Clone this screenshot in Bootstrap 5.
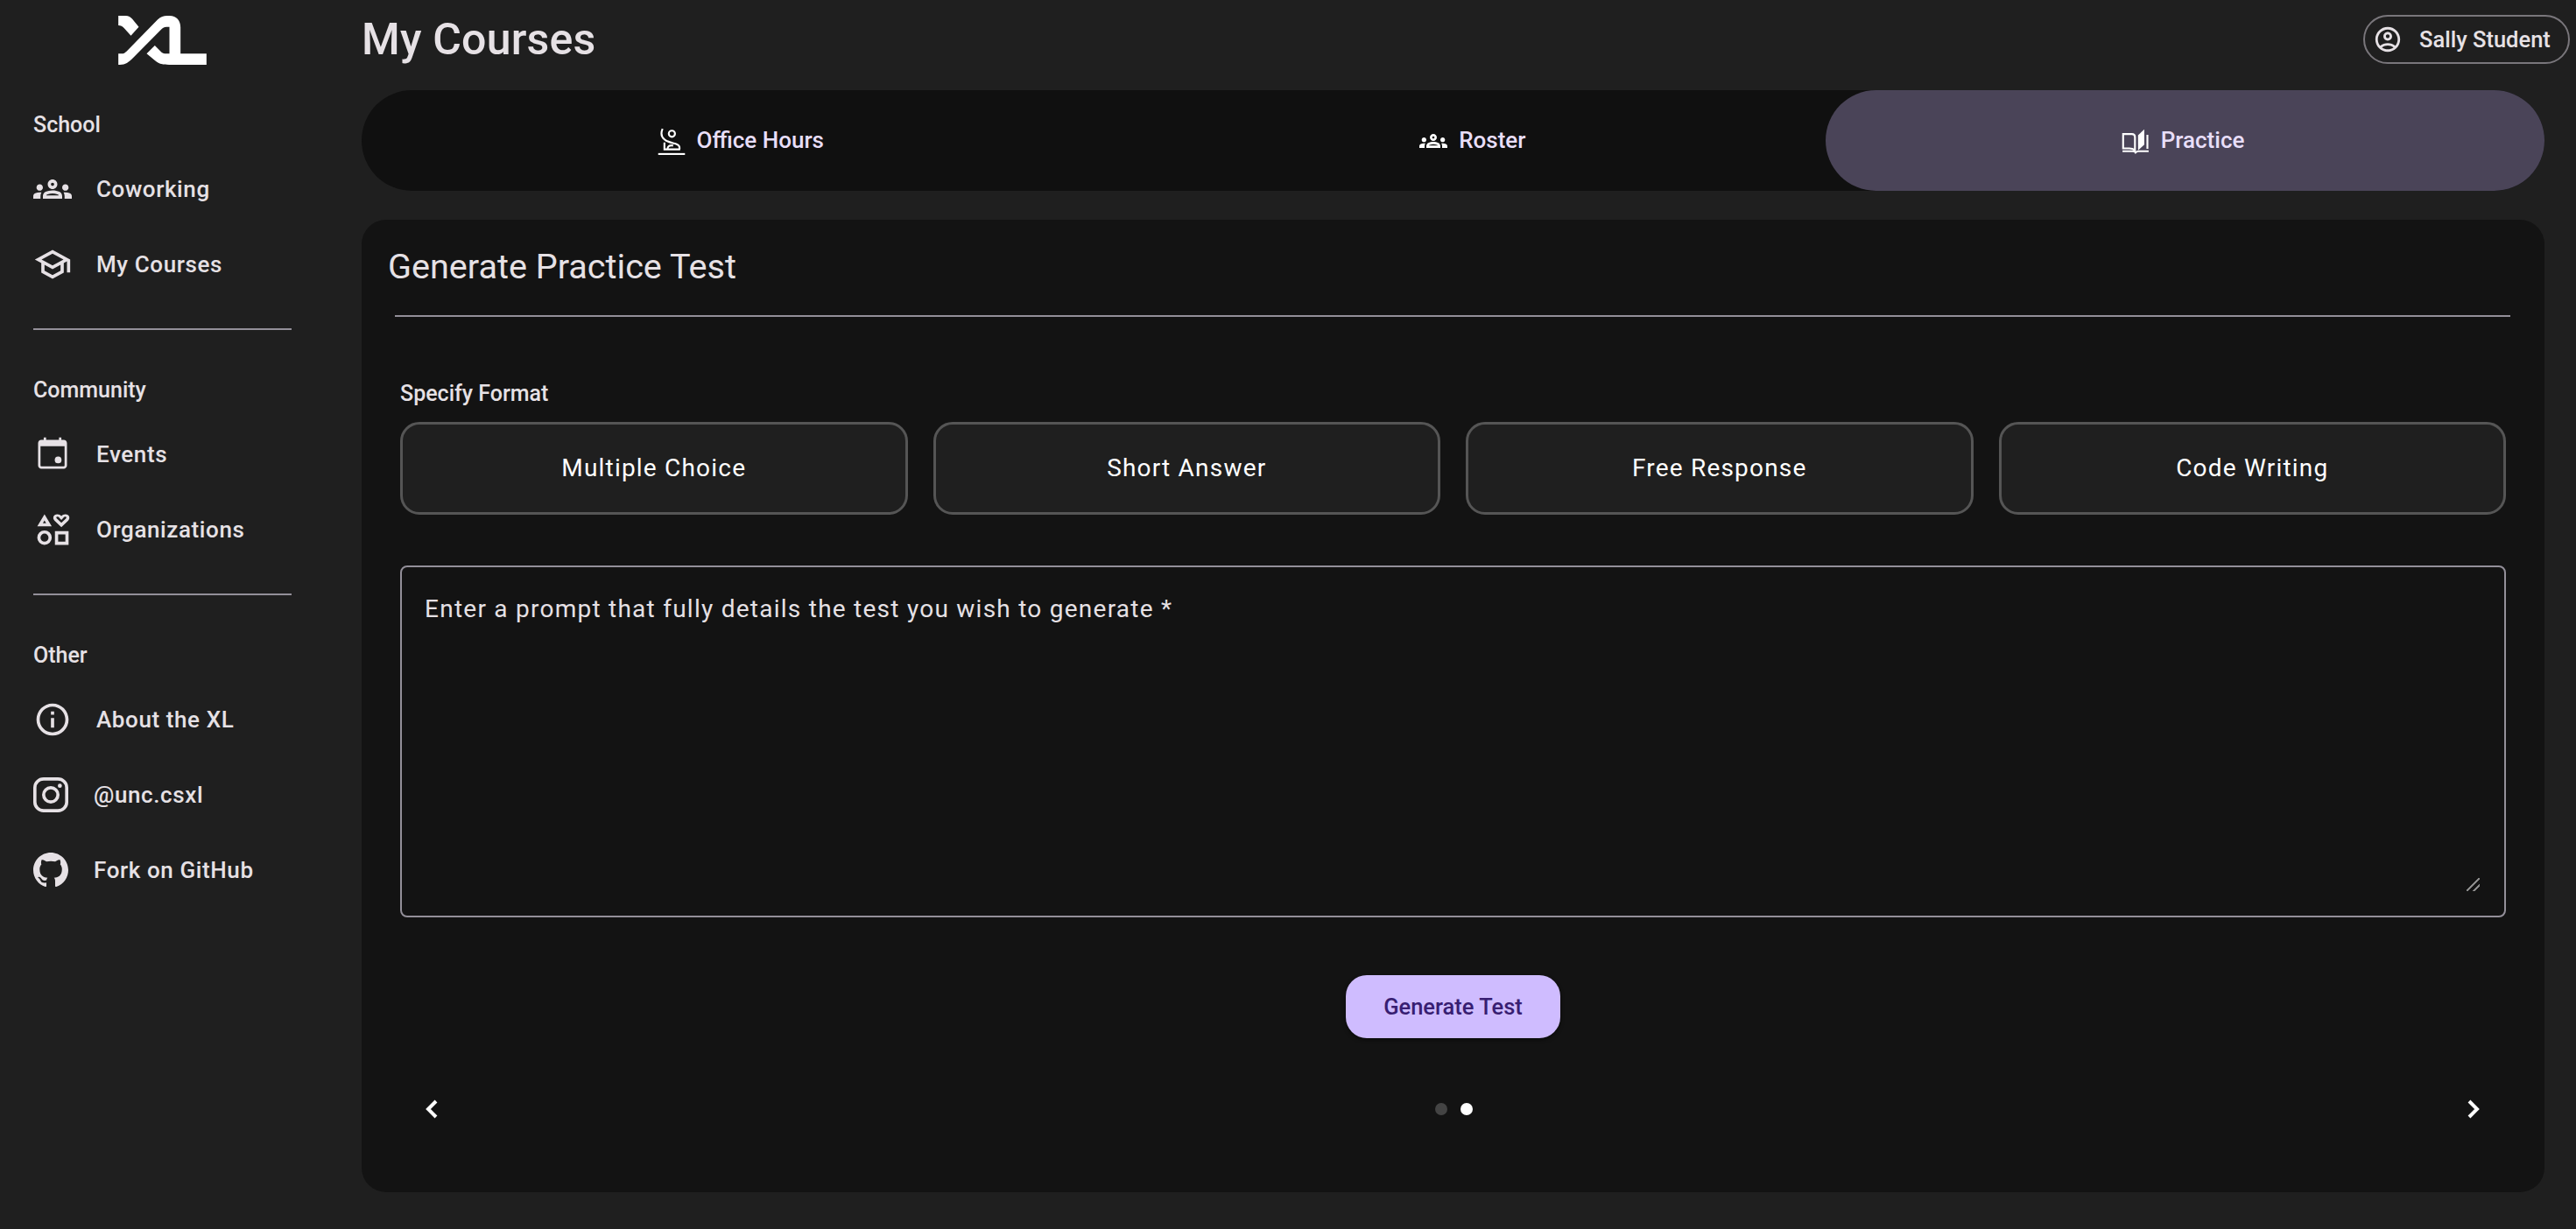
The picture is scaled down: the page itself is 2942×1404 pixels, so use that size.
<!DOCTYPE html>
<html lang="en">
<head>
<meta charset="UTF-8">
<meta name="viewport" content="width=device-width, initial-scale=1">
<title>My Courses</title>
<link href="https://cdn.jsdelivr.net/npm/bootstrap@5.3.0/dist/css/bootstrap.min.css" rel="stylesheet">
<style>
  body { background: #1f1f1f; color: #e6e1e5; font-family: Roboto, "Liberation Sans", sans-serif; height: 100vh; overflow: hidden; }

  /* sidebar */
  .side-nav { width: 413px; flex: none; padding: 18px 0 0 38px; }
  .side-logo { display: block; width: 101px; height: 56px; margin-left: 97px; margin-bottom: 51px; }
  .side-label { font-size: 25px; font-weight: 500; line-height: 36px; margin: 0 0 12px; }
  .side-link { display: flex; align-items: center; height: 86px; color: #e6e1e5; text-decoration: none; font-size: 26px; font-weight: 500; letter-spacing: .6px; }
  .side-link svg { width: 44px; height: 44px; fill: #e6e1e5; flex: none; margin-right: 28px; }
  .side-link.wide-icon svg { width: 40px; height: 40px; margin-right: 29px; }
  .side-rule { width: 295px; margin: 30px 0 51px; border: 0; border-top: 2px solid #938f99; opacity: 1; }

  /* main */
  .main-pane { padding-right: 36px; min-width: 0; }
  .page-head { height: 90px; margin-right: -29px; margin-bottom: 13px; }
  .page-title { font-size: 50px; font-weight: 500; letter-spacing: .2px; margin: 0; line-height: 90px; }
  .account-pill { height: 56px; width: 236px; border: 2px solid #79767b; border-radius: 28px; background: transparent; color: #e6e1e5; font-size: 25.5px; font-weight: 500; padding: 0 0 0 9px; }
  .account-pill svg { width: 34px; height: 34px; fill: #e6e1e5; margin-right: 19px; }

  .tab-strip { background: #101010; border-radius: 58px; height: 115px; margin-bottom: 33px; }
  .tab-item { border: 0; background: transparent; border-radius: 58px; color: #e8def8; font-size: 26px; font-weight: 500; padding: 0 5px 0 0; }
  .tab-item svg { width: 32px; height: 32px; fill: #fff; margin-right: 13px; }
  .tab-item svg.line-icon { fill: none; stroke: #fff; stroke-width: 6; }
  .tab-item.is-on { background: #4a4458; }

  .panel-box { background: #131313; border-radius: 28px; height: 1111px; padding: 25px 44px 0 44px; }
  .panel-title { font-size: 39.6px; font-weight: 400; line-height: 58px; margin: 0 0 0 -14px; }
  .panel-rule { margin: 26px -5px 0 -6px; border: 0; border-top: 2px solid #938f99; opacity: 1; }
  .format-label { font-size: 25px; font-weight: 500; line-height: 36px; margin: 70px 0 14px; }
  .format-btn { flex: 1 1 0; height: 106px; border: 3px solid #555; border-radius: 22px; background: #1f1f1f; color: #fff; font-size: 28px; letter-spacing: 1.2px; padding: 0; }
  .format-row { gap: 29px; margin-bottom: 58px; }
  .prompt-field { height: 402px; padding: 28px 28px 28px 26px; border: 2px solid #938f99; border-radius: 8px; }
  .prompt-input { display: block; width: 100%; height: 100%; padding: 0; background: transparent; border: 0; color: #e6e1e5; font-size: 28px; letter-spacing: 1.25px; line-height: 40px; }
  .prompt-input::placeholder { color: #e6e1e5; opacity: 1; }
  .prompt-input:focus { outline: none; }
  .prompt-input::-webkit-resizer { background: linear-gradient(135deg, transparent 46%, #8a8a8a 46%, #8a8a8a 56%, transparent 56%, transparent 72%, #8a8a8a 72%, #8a8a8a 82%, transparent 82%); }
  .generate-btn { width: 245px; height: 72px; margin: 66px auto 0; display: block; border: 0; border-radius: 24px; background: #cfbcff; color: #381e72; font-size: 25.5px; font-weight: 500; padding: 0; box-shadow: 0 2px 4px rgba(0,0,0,.5); }
  .pager-row { margin-top: 55px; padding: 0 18px 0 20px; height: 52px; }
  .pager-arrow { background: transparent; border: 0; padding: 0; line-height: 0; }
  .pager-arrow svg { width: 32px; height: 32px; fill: none; stroke: #fff; stroke-width: 4; }
  .pager-dots { gap: 15px; }
  .pager-dot { width: 14px; height: 14px; border-radius: 50%; background: #444; }
  .pager-dot.is-on { background: #fff; }
</style>
</head>
<body>
<div class="d-flex">
  <aside class="side-nav">
    <svg class="side-logo" viewBox="30 25 302 168" fill="#fff">
      <path d="M30 25H55C65 25 72 30 78 36L100 63 73 93 50 68C44 60 38 58 30 58Z"/>
      <path d="M30 193V155H40C50 155 52 152 58 147L165 38C175 28 185 25 197 25H205C230 25 243 42 243 65V155H332V193H213C188 193 170 192 155 178L127 155 155 127 178 150C184 155 192 155 205 155V63H195C187 63 183 66 178 71L80 170C65 185 55 193 35 193Z"/>
    </svg>
    <p class="side-label">School</p>
    <a class="side-link" href="#"><svg viewBox="0 0 24 24"><path d="M4 13c1.100 0 2-.9 2-2s-.9-2-2-2-2 .9-2 2 .9 2 2 2zm1.130 1.100c-.37-.06-.74-.1-1.130-.1-.99 0-1.930.21-2.780.58C.48 14.900 0 15.620 0 16.430V18h4.500v-1.610c0-.83.23-1.610.63-2.290zM20 13c1.100 0 2-.9 2-2s-.9-2-2-2-2 .9-2 2 .9 2 2 2zm4 3.430c0-.81-.48-1.530-1.220-1.850-.85-.37-1.790-.58-2.780-.58-.39 0-.76.04-1.130.1.4.68.63 1.460.63 2.290V18H24v-1.570zm-7.760-2.780c-1.170-.52-2.610-.9-4.240-.9-1.630 0-3.070.39-4.240.9C6.680 14.130 6 15.210 6 16.390V18h12v-1.610c0-1.180-.68-2.260-1.760-2.740zM8.070 16c.09-.23.13-.39.91-.69.97-.38 1.990-.56 3.020-.56s2.050.18 3.020.56c.77.3.81.46.91.69H8.070zM12 8c.55 0 1 .45 1 1s-.45 1-1 1-1-.45-1-1 .45-1 1-1m0-2c-1.660 0-3 1.340-3 3s1.340 3 3 3 3-1.340 3-3-1.340-3-3-3z"/></svg>Coworking</a>
    <a class="side-link" href="#"><svg viewBox="0 0 24 24"><path d="M12 3L1 9l4 2.180v6L12 21l7-3.820v-6l2-1.090V17h2V9L12 3zm6.820 6L12 12.720 5.180 9 12 5.280 18.820 9zM17 15.990l-5 2.730-5-2.730v-3.720L12 15l5-2.730v3.720z"/></svg>My Courses</a>
    <hr class="side-rule">
    <p class="side-label">Community</p>
    <a class="side-link" href="#"><svg viewBox="0 0 24 24"><path d="M16 1.500V3H8V1.500H6.500V3H5c-1.110 0-2 .9-2 2v14c0 1.100.89 2 2 2h14c1.100 0 2-.9 2-2V5c0-1.100-.9-2-2-2h-1.500V1.500zM19.500 19c0 .3-.2.5-.5.5H5c-.3 0-.5-.2-.5-.5V7h15z" fill-rule="evenodd"/><circle cx="15.500" cy="15.500" r="2.100"/></svg>Events</a>
    <a class="side-link" href="#"><svg viewBox="0 0 24 24"><path d="M7 2.500 2.500 10h9zM7 6.300 8 8H6zM17.500 10.500l-4.300-4.100C11.800 5 12.500 2.500 15 2.500c1 0 1.900.4 2.500 1.100.6-.7 1.500-1.100 2.500-1.100 2.500 0 3.200 2.500 1.800 3.900zM17.500 7.800l2.900-2.800c.5-.5.2-1-.4-1-.6 0-1 .3-1.300.8l-1.200 1.200-1.200-1.200c-.3-.5-.7-.8-1.300-.8-.6 0-.9.500-.4 1z" fill-rule="evenodd"/><path d="M7 12.500a4.500 4.500 0 1 0 0 9 4.500 4.500 0 0 0 0-9zm0 2a2.500 2.500 0 1 1 0 5 2.500 2.500 0 0 1 0-5zM13.500 13v8.500H22V13zm2 2H20v4.500h-4.500z" fill-rule="evenodd"/></svg>Organizations</a>
    <hr class="side-rule">
    <p class="side-label">Other</p>
    <a class="side-link" href="#"><svg viewBox="0 0 24 24"><path d="M11 7h2v2h-2zm0 4h2v6h-2zm1-9C6.480 2 2 6.480 2 12s4.480 10 10 10 10-4.480 10-10S17.520 2 12 2zm0 18c-4.410 0-8-3.590-8-8s3.590-8 8-8 8 3.590 8 8-3.590 8-8 8z"/></svg>About the XL</a>
    <a class="side-link wide-icon" href="#"><svg viewBox="1 1 22 22"><rect x="2" y="2" width="20" height="20" rx="5.500" fill="none" stroke="#e6e1e5" stroke-width="2"/><circle cx="12" cy="12" r="4.500" fill="none" stroke="#e6e1e5" stroke-width="2"/><circle cx="17.700" cy="6.300" r="1.300"/></svg>@unc.csxl</a>
    <a class="side-link wide-icon" href="#"><svg viewBox="0 0 16 16"><path d="M8 0C3.580 0 0 3.580 0 8c0 3.540 2.290 6.530 5.470 7.590.4.070.55-.17.55-.38 0-.19-.01-.82-.01-1.490-2.010.37-2.530-.49-2.690-.94-.09-.23-.48-.94-.82-1.130-.28-.15-.68-.52-.01-.53.63-.01 1.080.58 1.230.82.72 1.210 1.870.87 2.330.66.07-.52.28-.87.51-1.070-1.780-.2-3.640-.89-3.640-3.950 0-.87.31-1.590.82-2.150-.08-.2-.36-1.020.08-2.120 0 0 .67-.21 2.200.82.64-.18 1.320-.27 2-.27.68 0 1.360.09 2 .27 1.530-1.040 2.200-.82 2.200-.82.44 1.100.16 1.920.08 2.120.51.56.82 1.270.82 2.150 0 3.070-1.870 3.750-3.650 3.950.29.25.54.73.54 1.480 0 1.070-.01 1.930-.01 2.200 0 .21.15.46.55.38A8.013 8.013 0 0 0 16 8c0-4.420-3.580-8-8-8z"/></svg>Fork on GitHub</a>
  </aside>

  <main class="main-pane flex-grow-1">
    <div class="page-head d-flex justify-content-between align-items-center">
      <h1 class="page-title">My Courses</h1>
      <button class="account-pill d-flex align-items-center" type="button">
        <svg viewBox="0 0 24 24"><path d="M12 2C6.480 2 2 6.480 2 12s4.480 10 10 10 10-4.480 10-10S17.520 2 12 2zM7.350 18.500C8.660 17.560 10.260 17 12 17s3.340.56 4.650 1.500c-1.310.94-2.910 1.500-4.650 1.500s-3.340-.56-4.650-1.500zm10.790-1.380C16.450 15.800 14.320 15 12 15s-4.450.8-6.140 2.120C4.700 15.730 4 13.950 4 12c0-4.420 3.580-8 8-8s8 3.580 8 8c0 1.950-.7 3.730-1.860 5.120zM12 6c-1.930 0-3.500 1.570-3.500 3.500S10.070 13 12 13s3.500-1.570 3.500-3.500S13.930 6 12 6zm0 5c-.83 0-1.500-.67-1.500-1.500S11.170 8 12 8s1.500.67 1.500 1.500S12.830 11 12 11z"/></svg>Sally Student
      </button>
    </div>

    <div class="tab-strip d-flex">
      <button class="tab-item flex-grow-1 d-flex align-items-center justify-content-center" type="button">
        <svg class="line-icon" viewBox="30 30 90 90"><circle cx="76" cy="52" r="10"/><path d="M46 36C40 50 42 62 52 70 60 78 72 80 88 84 98 87 102 94 100 102H52V80M62 102C62 92 68 88 80 90"/><path d="M32 117H118"/></svg>Office Hours
      </button>
      <button class="tab-item flex-grow-1 d-flex align-items-center justify-content-center" type="button">
        <svg viewBox="0 0 24 24"><path d="M4 13c1.100 0 2-.9 2-2s-.9-2-2-2-2 .9-2 2 .9 2 2 2zm1.130 1.100c-.37-.06-.74-.1-1.130-.1-.99 0-1.930.21-2.780.58C.48 14.900 0 15.620 0 16.430V18h4.500v-1.610c0-.83.23-1.610.63-2.290zM20 13c1.100 0 2-.9 2-2s-.9-2-2-2-2 .9-2 2 .9 2 2 2zm4 3.430c0-.81-.48-1.530-1.220-1.850-.85-.37-1.790-.58-2.780-.58-.39 0-.76.04-1.130.1.4.68.63 1.460.63 2.290V18H24v-1.570zm-7.760-2.780c-1.170-.52-2.610-.9-4.240-.9-1.630 0-3.070.39-4.240.9C6.680 14.130 6 15.210 6 16.390V18h12v-1.610c0-1.180-.68-2.260-1.760-2.740zM8.070 16c.09-.23.13-.39.91-.69.97-.38 1.990-.56 3.020-.56s2.050.18 3.020.56c.77.3.81.46.91.69H8.070zM12 8c.55 0 1 .45 1 1s-.45 1-1 1-1-.45-1-1 .45-1 1-1m0-2c-1.660 0-3 1.340-3 3s1.340 3 3 3 3-1.340 3-3-1.340-3-3-3z"/></svg>Roster
      </button>
      <button class="tab-item is-on flex-grow-1 d-flex align-items-center justify-content-center" type="button">
        <svg class="line-icon" viewBox="25 25 90 90"><path d="M30 48H58Q68 48 68 58V100Q60 94 50 94H30Z"/><path d="M108 50V95M28 103H60Q68 103 70 107 74 103 80 103H112"/><path d="M78 52 98 33V82L78 100Z" fill="#fff" stroke="none"/></svg>Practice
      </button>
    </div>

    <section class="panel-box">
      <h2 class="panel-title">Generate Practice Test</h2>
      <hr class="panel-rule">
      <p class="format-label">Specify Format</p>
      <div class="format-row d-flex">
        <button class="format-btn" type="button">Multiple Choice</button>
        <button class="format-btn" type="button">Short Answer</button>
        <button class="format-btn" type="button">Free Response</button>
        <button class="format-btn" type="button">Code Writing</button>
      </div>
      <div class="prompt-field">
        <textarea class="prompt-input" placeholder="Enter a prompt that fully details the test you wish to generate *"></textarea>
      </div>
      <button class="generate-btn" type="button">Generate Test</button>
      <div class="pager-row d-flex align-items-center justify-content-between">
        <button class="pager-arrow" type="button" aria-label="Previous"><svg viewBox="0 0 32 32"><path d="M21 7 12 16l9 9"/></svg></button>
        <div class="pager-dots d-flex">
          <span class="pager-dot"></span>
          <span class="pager-dot is-on"></span>
        </div>
        <button class="pager-arrow" type="button" aria-label="Next"><svg viewBox="0 0 32 32"><path d="M8 7l9 9-9 9"/></svg></button>
      </div>
    </section>
  </main>
</div>
<script src="https://cdn.jsdelivr.net/npm/bootstrap@5.3.0/dist/js/bootstrap.bundle.min.js"></script>
</body>
</html>
